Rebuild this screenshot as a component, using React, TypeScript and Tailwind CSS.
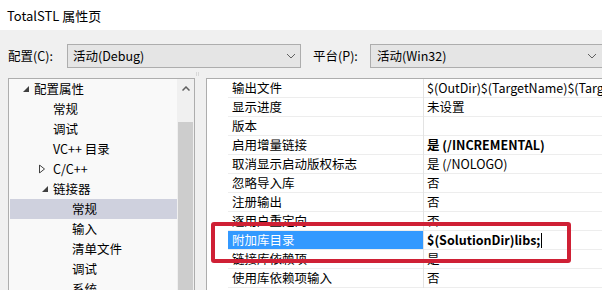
import React from "react";

const FONT = { fontFamily: '"Noto Sans CJK SC", "Noto Sans", sans-serif' };

function Chevron() {
  return (
    <svg width="10" height="6" viewBox="0 0 10 6" className="block">
      <path d="M1 1 L5 5 L9 1" fill="none" stroke="#606060" strokeWidth="1" />
    </svg>
  );
}

function Expanded() {
  return (
    <svg width="6" height="6" viewBox="0 0 6 6" className="block">
      <path d="M6 0 L6 6 L0 6 Z" fill="#404040" />
    </svg>
  );
}

function Collapsed() {
  return (
    <svg width="6" height="9" viewBox="0 0 6 9" className="block">
      <path d="M0.5 0.5 L5.5 4.5 L0.5 8.5 Z" fill="none" stroke="#404040" strokeWidth="1" />
    </svg>
  );
}

type TreeItem = { text: string; level: number; icon?: "e" | "c"; selected?: boolean };

const tree: TreeItem[] = [
  { text: "配置属性", level: 0, icon: "e" },
  { text: "常规", level: 1 },
  { text: "调试", level: 1 },
  { text: "VC++ 目录", level: 1 },
  { text: "C/C++", level: 1, icon: "c" },
  { text: "链接器", level: 1, icon: "e" },
  { text: "常规", level: 2, selected: true },
  { text: "输入", level: 2 },
  { text: "清单文件", level: 2 },
  { text: "调试", level: 2 },
  { text: "系统", level: 2 },
];

type Row = { label: string; value: string; bold?: boolean; selected?: boolean };

const rows: Row[] = [
  { label: "输出文件", value: "$(OutDir)$(TargetName)$(TargetExt)" },
  { label: "显示进度", value: "未设置" },
  { label: "版本", value: "" },
  { label: "启用增量链接", value: "是 (/INCREMENTAL)", bold: true },
  { label: "取消显示启动版权标志", value: "是 (/NOLOGO)" },
  { label: "忽略导入库", value: "否" },
  { label: "注册输出", value: "否" },
  { label: "逐用户重定向", value: "否" },
  { label: "附加库目录", value: "$(SolutionDir)libs;", bold: true, selected: true },
  { label: "链接库依赖项", value: "是" },
  { label: "使用库依赖项输入", value: "否" },
];

export default function App() {
  return (
    <div
      className="relative w-[602px] h-[290px] overflow-hidden bg-[#f0f0f0] text-[#000] flex flex-col"
      style={FONT}
    >
      {/* title */}
      <div className="h-[30px] shrink-0 bg-white flex items-center pl-[7px] text-[13px] leading-none">
        TotalSTL 属性页
      </div>

      {/* config row */}
      <div className="h-[48px] shrink-0 flex items-start pt-[14px] pl-[8px] text-[12.5px]">
        <div className="w-[59px] h-[24px] flex items-center">配置(C):</div>
        <div className="w-[234px] h-[24px] border border-[#adadad] bg-[#e5e5e5] flex items-center pl-[5px] pr-[4px]">
          <span className="flex-1">活动(Debug)</span>
          <Chevron />
        </div>
        <div className="w-[69px] h-[24px] flex items-center pl-[12px]">平台(P):</div>
        <div className="flex-1 mr-[-6px] h-[24px] border border-[#adadad] bg-[#e5e5e5] flex items-center pl-[6px] pr-[10px]">
          <span className="flex-1">活动(Win32)</span>
          <Chevron />
        </div>
      </div>

      {/* panels */}
      <div className="flex-1 flex pl-[8px] min-h-0">
        {/* tree */}
        <div className="w-[187px] border border-b-0 border-[#adadad] bg-[#f9f9f9] flex overflow-hidden">
          <div className="flex-1 text-[12.5px]">
            {tree.map((t, i) => (
              <div
                key={i}
                className={`h-[20px] flex items-center ml-[1px] ${t.selected ? "bg-[#cfd1de]" : ""}`}
                style={{ paddingLeft: 24 + t.level * 19 }}
              >
                <span className="relative">
                  {t.icon && (
                    <span
                      className={`absolute top-1/2 -translate-y-1/2 ${t.icon === "e" ? "left-[-11px]" : "left-[-14px]"}`}
                    >
                      {t.icon === "e" ? <Expanded /> : <Collapsed />}
                    </span>
                  )}
                  {t.text}
                </span>
              </div>
            ))}
          </div>
          {/* scrollbar */}
          <div className="w-[17px] bg-[#f0f0f0] flex flex-col items-center">
            <div className="h-[18px] flex items-center justify-center">
              <svg width="8" height="5" viewBox="0 0 8 5" className="block">
                <path d="M0.5 4.5 L4 1 L7.5 4.5" fill="none" stroke="#606060" strokeWidth="1.5" />
              </svg>
            </div>
            <div className="mt-[25px] w-[15px] flex-1 bg-[#cdcdcd]" />
          </div>
        </div>

        {/* splitter */}
        <div className="w-[11px] relative">
          <div className="absolute left-[1px] top-[-6px] w-[3px] h-[4px] border-x border-[#d8d8d8]" />
        </div>

        {/* grid */}
        <div className="flex-1 mr-[-6px] border border-b-0 border-[#adadad] bg-white flex flex-col overflow-hidden">
          {rows.map((r, i) => (
            <div key={i} className="h-[19px] shrink-0 flex text-[12.5px]">
              <div className="w-[21px] shrink-0 bg-white" />
              <div
                className={`w-[195px] shrink-0 flex items-center pl-[4px] border-b border-[#ededed] ${
                  r.selected ? "bg-[#3399ff] text-white" : ""
                }`}
              >
                {r.label}
              </div>
              <div className="w-[1px] bg-[#e3e3e3]" />
              <div
                className={`flex-1 flex items-center pl-[3px] border-b border-[#ededed] whitespace-nowrap overflow-hidden ${
                  r.bold ? "font-bold" : ""
                }`}
              >
                {r.value}
                {r.selected && <span className="inline-block w-[1px] h-[15px] bg-black ml-[1px]" />}
              </div>
            </div>
          ))}
        </div>
      </div>

      {/* red highlight */}
      <div className="absolute left-[211px] top-[222px] w-[360px] h-[41px] border-[4px] border-[#cf2035] rounded-[3px]" />
    </div>
  );
}
